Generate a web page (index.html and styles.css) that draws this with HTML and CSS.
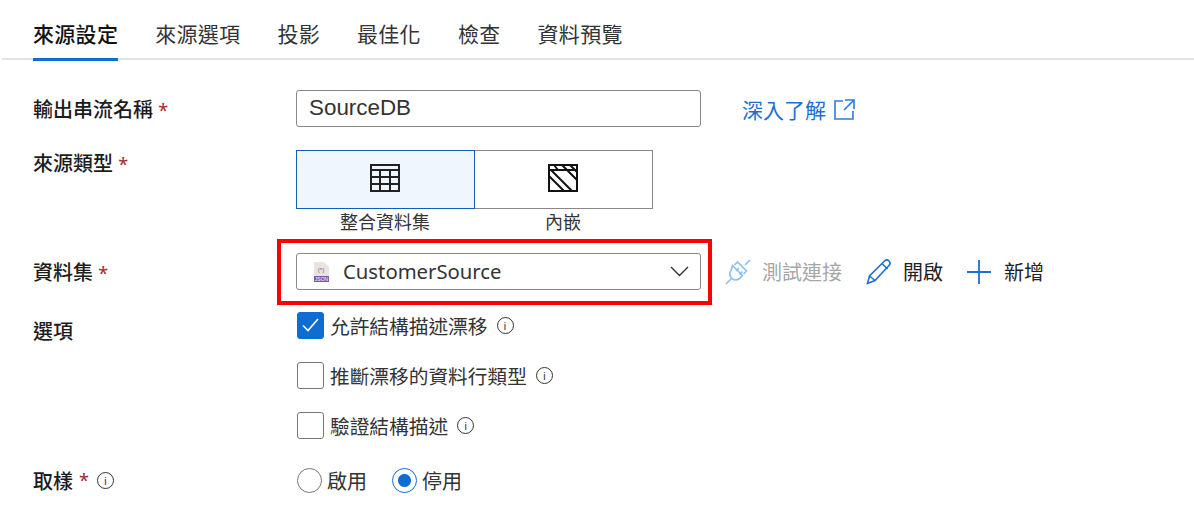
FILE: index.html
```html
<!DOCTYPE html>
<html lang="zh-Hant">
<head>
  <meta charset="utf-8">
  <title>來源設定</title>
  <link rel="stylesheet" href="styles.css">
</head>
<body>
  <nav class="tabs">
    <a class="tab active">來源設定</a>
    <a class="tab">來源選項</a>
    <a class="tab">投影</a>
    <a class="tab">最佳化</a>
    <a class="tab">檢查</a>
    <a class="tab">資料預覽</a>
  </nav>

  <form class="form">
    <div class="row row-name">
      <div class="label">輸出串流名稱 <span class="req">*</span></div>
      <div class="input">SourceDB</div>
      <a class="learn">深入了解
        <svg class="icon-ext" width="21" height="21" viewBox="0 0 21 21" fill="none" stroke="#2f7bd8" stroke-width="1.6">
          <path d="M9 2H1v18h18v-8"/>
          <path d="M11 1h9v9M20 1 10 11"/>
        </svg>
      </a>
    </div>

    <div class="row row-type">
      <div class="label">來源類型 <span class="req">*</span></div>
      <div class="types">
        <div class="type">
          <div class="type-box selected">
            <svg width="30" height="28" viewBox="0 0 30 28" fill="none" stroke="#222" stroke-width="2">
              <rect x="1" y="1" width="28" height="26"/>
              <path d="M1 6h28M1 13h28M1 20h28M10 6v21M20 6v21"/>
            </svg>
          </div>
          <div class="type-name">整合資料集</div>
        </div>
        <div class="type">
          <div class="type-box">
            <svg width="30" height="28" viewBox="0 0 30 28" fill="none" stroke="#111" stroke-width="2">
              <rect x="1" y="1" width="28" height="26"/>
              <path d="M1 6h28M1 12l15 15M3 6l21 21M6 1l4 5M14 1l15 15M22 1l7 7"/>
            </svg>
          </div>
          <div class="type-name">內嵌</div>
        </div>
      </div>
    </div>

    <div class="row row-dataset">
      <div class="label">資料集 <span class="req">*</span></div>
      <div class="select-wrap">
        <div class="select">
          <svg class="icon-json" width="15" height="20" viewBox="0 0 15 20">
            <path d="M0 0h10l5 5v9H0z" fill="#e9e5dc"/>
            <text x="7" y="10" text-anchor="middle" class="json-braces">{*}</text>
            <rect y="14" width="15" height="6" fill="#7d5aa6"/>
            <text x="7.5" y="19" text-anchor="middle" class="json-tag">JSON</text>
          </svg>
          <span class="select-text">CustomerSource</span>
          <svg class="icon-chev" width="19" height="11" viewBox="0 0 19 11" fill="none" stroke="#333" stroke-width="1.4">
            <path d="M1 1l8.500 8.500L18 1"/>
          </svg>
        </div>
        <div class="highlight"></div>
      </div>
      <div class="actions">
        <span class="action disabled">
          <svg width="26" height="26" viewBox="0 0 26 26" fill="none" stroke="#8fc1ec" stroke-width="1.700">
            <path d="M1 25l5.500-5.500M20 6l5-5"/>
            <path d="M9 7l10 10-3 3c-2.500 2-6 2-8-.5s-2.500-5-.5-7.500z" transform="translate(-1.500 -.5)"/>
            <path d="M11 5l3-3 9 9-3 3" transform="translate(-1.500 1)"/>
            <path d="M11 12l3-3M14.500 15.500l3-3"/>
          </svg>
          測試連接
        </span>
        <span class="action">
          <svg width="26" height="26" viewBox="0 0 26 26" fill="none" stroke="#1f6fd0" stroke-width="1.600">
            <path d="M1.500 24.500l2-7.500L18.500 2c1.500-1.300 3.200-1.300 4.500 0s1.400 3 0 4.500L9 21.500z"/>
            <path d="M16 4.500l5.500 5.500M3.500 17l5.500 4.500"/>
          </svg>
          開啟
        </span>
        <span class="action action-add">
          <svg width="24" height="24" viewBox="0 0 24 24" fill="none" stroke="#1f6fd0" stroke-width="1.800">
            <path d="M0 12h24M12 0v24"/>
          </svg>
          新增
        </span>
      </div>
    </div>

    <div class="row row-options">
      <div class="label label-options">選項</div>
      <div class="checks">
        <div class="check-row">
          <span class="check checked">
            <svg width="17" height="14" viewBox="0 0 17 14" fill="none" stroke="#fff" stroke-width="1.600">
              <path d="M1 7.500l5 5L16 1"/>
            </svg>
          </span>
          允許結構描述漂移
          <span class="info">i</span>
        </div>
        <div class="check-row">
          <span class="check"></span>
          推斷漂移的資料行類型
          <span class="info">i</span>
        </div>
        <div class="check-row">
          <span class="check"></span>
          驗證結構描述
          <span class="info">i</span>
        </div>
      </div>
    </div>

    <div class="row row-sampling">
      <div class="label label-sampling">取樣 <span class="req">*</span> <span class="info">i</span></div>
      <div class="radios">
        <span class="radio-item"><span class="radio"></span>啟用</span>
        <span class="radio-item"><span class="radio on"></span>停用</span>
      </div>
    </div>
  </form>
</body>
</html>
```

FILE: styles.css
```css
body {
  margin: 0;
  background: #fff;
  color: #222;
  font-family: "Noto Sans", "Noto Sans CJK TC", sans-serif;
  font-size: 20px;
}

.tabs {
  display: flex;
  gap: 37px;
  height: 60px;
  padding-left: 31px;
  margin-left: 2px;
  border-bottom: 2px solid #e3e3e3;
  box-sizing: border-box;
}

.tab {
  height: 60px;
  line-height: 68px;
  font-size: 21px;
  letter-spacing: .3px;
  white-space: nowrap;
  color: #333;
  box-sizing: border-box;
}

.tab.active {
  color: #111;
  font-weight: 500;
  border-bottom: 3px solid #0f6cd0;
  height: 61px;
}

.form {
  padding: 30px 0 0 33px;
}

.row {
  display: flex;
}

.label {
  flex: 0 0 263px;
  font-weight: 500;
  color: #1c1c1c;
}

.req {
  color: #a4262c;
  font-size: 18px;
  font-weight: 400;
}

.row-name {
  height: 37px;
  align-items: center;
}

.input {
  box-sizing: border-box;
  width: 405px;
  height: 37px;
  line-height: 34px;
  padding-left: 12px;
  border: 1px solid #8a8886;
  border-radius: 3px;
  font-family: "Liberation Sans", sans-serif;
  font-size: 22.4px;
  color: #333;
}

.learn {
  display: flex;
  align-items: center;
  gap: 8px;
  margin-left: 41px;
  color: #1f6fd0;
  font-size: 21px;
}

.icon-ext {
  margin-top: 1px;
}

.row-type {
  margin-top: 23px;
  height: 82px;
}

.row-type .label {
  line-height: 28px;
}

.types {
  display: flex;
}

.type {
  width: 178px;
  text-align: center;
}

.type-box {
  box-sizing: border-box;
  height: 59px;
  padding: 0 2px 3px 0;
  display: flex;
  align-items: center;
  justify-content: center;
  border: 1px solid #8a8886;
  margin-right: -1px;
}

.type-box.selected {
  background: #eff6fe;
  border-color: #0f5fb8;
  position: relative;
  z-index: 1;
}

.type-name {
  font-size: 18px;
  line-height: 27px;
  color: #333;
}

.row-dataset {
  margin-top: 21px;
  height: 37px;
  align-items: center;
}

.select-wrap {
  position: relative;
  width: 405px;
}

.select {
  box-sizing: border-box;
  height: 37px;
  display: flex;
  align-items: center;
  padding: 0 11px 0 17px;
  border: 1px solid #8a8886;
  border-radius: 3px;
}

.select-text {
  flex: 1;
  margin-left: 14px;
  padding-bottom: 2px;
  font-size: 20.3px;
  color: #333;
}

.json-braces {
  font-size: 6px;
  fill: #7d5aa6;
  font-family: "Liberation Sans", sans-serif;
}

.json-tag {
  font-size: 5px;
  fill: #fff;
  font-family: "Liberation Sans", sans-serif;
}

.highlight {
  position: absolute;
  top: -14px;
  left: -19px;
  right: -11px;
  bottom: -15px;
  border: 4px solid #f00;
}

.actions {
  display: flex;
  align-items: center;
  margin-left: 24px;
  gap: 24px;
}

.action {
  display: flex;
  align-items: center;
  gap: 11px;
  color: #222;
}

.action-add {
  gap: 13px;
}

.action.disabled {
  color: #a6a6a6;
}

.row-options {
  margin-top: 21px;
}

.label-options {
  padding-top: 5px;
}

.checks {
  display: flex;
  flex-direction: column;
  gap: 22px;
  margin-left: 1px;
  font-size: 19.7px;
}

.check-row {
  display: flex;
  align-items: center;
  height: 28px;
  gap: 6px;
  color: #333;
}

.check {
  box-sizing: border-box;
  width: 27px;
  height: 27px;
  border: 1px solid #777;
  border-radius: 3px;
  display: flex;
  align-items: center;
  justify-content: center;
}

.check.checked {
  background: #0f6cd0;
  border-color: #0f6cd0;
}

.info {
  box-sizing: border-box;
  display: inline-flex;
  align-items: center;
  justify-content: center;
  width: 17px;
  height: 17px;
  margin-left: 3px;
  border: 1.500px solid #333;
  border-radius: 50%;
  font-size: 11px;
  font-weight: 400;
  line-height: 1;
  color: #333;
}

.row-sampling {
  margin-top: 27px;
  height: 28px;
  align-items: center;
}

.label-sampling {
  display: flex;
  align-items: center;
  gap: 6px;
}

.label-sampling .info {
  margin-left: 2px;
}

.radios {
  display: flex;
  gap: 25px;
  margin-left: 1px;
}

.radio-item {
  display: flex;
  align-items: center;
  gap: 5px;
  color: #333;
}

.radio {
  box-sizing: border-box;
  width: 25px;
  height: 25px;
  border: 1.500px solid #777;
  border-radius: 50%;
}

.radio.on {
  border: 1.500px solid #0f6cd0;
  background: radial-gradient(circle, #0f6cd0 0 6px, #fff 7px);
}
```
